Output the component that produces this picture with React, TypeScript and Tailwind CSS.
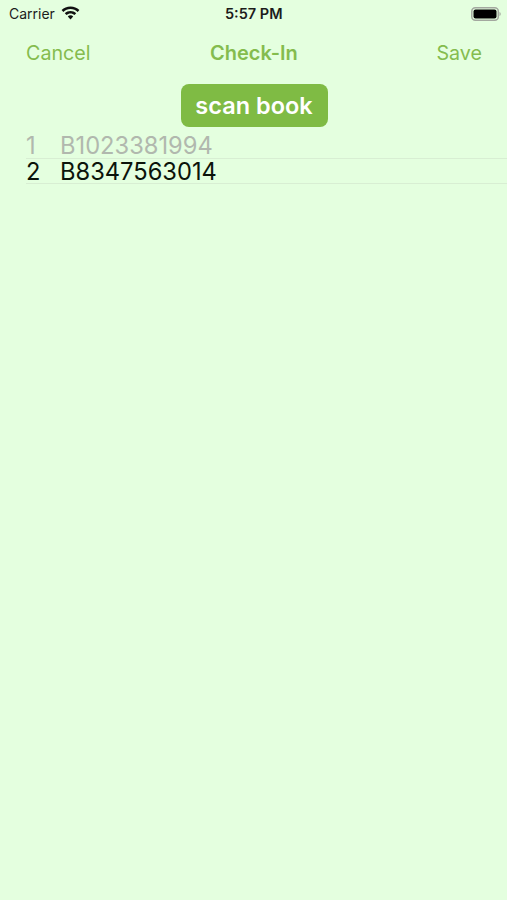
export default function App() {
  return (
    <div className="w-[507px] h-[900px] bg-[#e4ffdf] overflow-hidden font-['Inter','Liberation_Sans',sans-serif]">
      <div className="flex h-[28px] items-center justify-between pl-[9px] pr-[6px] relative">
        <div className="flex items-center gap-[6px]">
          <span className="text-[14px] leading-none text-[#1c1c1c]">Carrier</span>
          <svg width="19" height="14" viewBox="0 0 19 14" fill="#111" className="-mt-[2px]">
            <path d="M9.5 0.5C6 0.5 2.9 1.8 0.6 4l1.7 1.9C4.2 4.1 6.7 3 9.5 3s5.3 1.1 7.2 2.9L18.4 4C16.1 1.8 13 .5 9.5.5z" />
            <path d="M9.5 5C7.3 5 5.300 5.800 3.800 7.200l1.700 1.900C6.600 8.100 8 7.500 9.500 7.500s2.900.6 4 1.600l1.700-1.900C13.700 5.800 11.700 5 9.500 5z" />
            <path d="M9.500 9.300c-1.100 0-2 .4-2.700 1.100l2.700 3 2.700-3c-.7-.7-1.600-1.100-2.700-1.100z" />
          </svg>
        </div>
        <span className="text-[14.5px] leading-none font-semibold text-[#1c1c1c] absolute left-[225px]">5:57 PM</span>
        <svg width="30" height="14" viewBox="0 0 30 14">
          <rect x="0.8" y="0.8" width="26.500" height="12.400" rx="3.500" fill="none" stroke="#a3a89f" strokeWidth="1.500" />
          <rect x="2.500" y="2.500" width="23" height="9" rx="2" fill="#000" />
          <path d="M28.500 5v4c.8-.3 1.200-1 1.200-2s-.4-1.700-1.200-2z" fill="#a3a89f" />
        </svg>
      </div>
      <div className="flex h-[51px] items-center justify-between pl-[26px] pr-[25px] text-[19.7px] text-[#84bc4e] relative">
        <span>Cancel</span>
        <span className="font-semibold text-[20px] leading-[26px] absolute left-[210px] top-[12px]">Check-In</span>
        <span>Save</span>
      </div>
      <div className="flex justify-center mt-[5px] pl-[1px]">
        <button className="w-[147px] h-[43px] bg-[#7fbb44] rounded-[8px] text-white text-[23.5px] leading-[43px] font-semibold">scan book</button>
      </div>
      <div className="pl-[26px] mt-[6px] text-[23.7px]">
        <div className="flex h-[26px] items-center leading-[24px] text-[#b1b8ae] border-b border-[#d8eed3]">
          <span className="w-[34px]">1</span>
          <span>B1023381994</span>
        </div>
        <div className="flex h-[25px] items-end leading-[22px] text-[#0b140a] border-b border-[#d8eed3]">
          <span className="w-[34px]">2</span>
          <span>B8347563014</span>
        </div>
      </div>
    </div>
  );
}
